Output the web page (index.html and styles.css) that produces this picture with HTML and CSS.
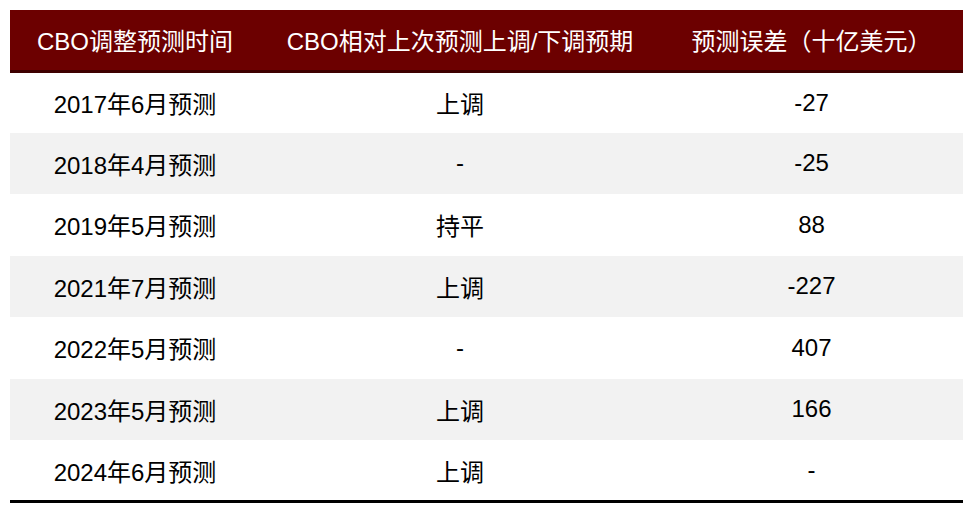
FILE: index.html
```html
<!DOCTYPE html>
<html lang="zh">
<head>
<meta charset="utf-8">
<link rel="stylesheet" href="styles.css">
</head>
<body>
<table class="tbl">
  <colgroup>
    <col class="c1"><col class="c2"><col class="c3">
  </colgroup>
  <thead>
    <tr class="head">
      <th>CBO调整预测时间</th>
      <th>CBO相对上次预测上调/下调预期</th>
      <th>预测误差（十亿美元）</th>
    </tr>
  </thead>
  <tbody>
    <tr><td>2017年6月预测</td><td>上调</td><td>-27</td></tr>
    <tr class="alt"><td>2018年4月预测</td><td>-</td><td>-25</td></tr>
    <tr><td>2019年5月预测</td><td>持平</td><td>88</td></tr>
    <tr class="alt"><td>2021年7月预测</td><td>上调</td><td>-227</td></tr>
    <tr><td>2022年5月预测</td><td>-</td><td>407</td></tr>
    <tr class="alt"><td>2023年5月预测</td><td>上调</td><td>166</td></tr>
    <tr class="last"><td>2024年6月预测</td><td>上调</td><td>-</td></tr>
  </tbody>
</table>
</body>
</html>
```
FILE: styles.css
```css
html, body {
  margin: 0;
  padding: 0;
  background: #ffffff;
}
body {
  padding: 10px 0 0 10px;
  font-family: "Liberation Sans", "Noto Sans CJK SC", sans-serif;
}
.tbl {
  border-collapse: collapse;
  table-layout: fixed;
  width: 953px;
  font-size: 24px;
  color: #000;
}
.c1 { width: 250px; }
.c2 { width: 400px; }
.c3 { width: 303px; }
.tbl th, .tbl td {
  padding: 0;
  text-align: center;
  vertical-align: middle;
  font-weight: normal;
  white-space: nowrap;
}
.head th {
  background: #6c0000;
  color: #ffffff;
  height: 61px;
  border-bottom: 3px solid #3e0000;
  box-sizing: border-box;
}
.tbl tbody td {
  height: 61.5px;
  box-sizing: border-box;
}
.alt td {
  background: #f2f2f2;
}
.last td {
  border-bottom: 3px solid #000;
}
```
